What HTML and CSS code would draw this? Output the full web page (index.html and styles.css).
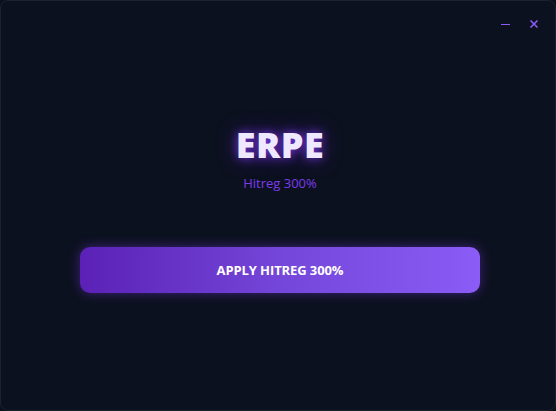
FILE: index.html
```html
<!DOCTYPE html>
<html>
<head>
<meta charset="utf-8">
<link rel="stylesheet" href="styles.css">
</head>
<body>
<div class="window">
  <div class="titlebar">
    <button class="ctl min" aria-label="Minimize"><svg width="10" height="10" viewBox="0 0 10 10"><line x1="1" y1="5.5" x2="10" y2="5.5" stroke="#8b5cf6" stroke-width="1"/></svg></button>
    <button class="ctl close" aria-label="Close"><svg width="10" height="10" viewBox="0 0 10 10"><path d="M1.5 1.5L8.5 8.5M8.5 1.5L1.5 8.5" stroke="#8b5cf6" stroke-width="1.6"/></svg></button>
  </div>
  <main class="content">
    <h1 class="title">ERPE</h1>
    <p class="subtitle">Hitreg 300%</p>
    <button class="apply">APPLY HITREG 300%</button>
  </main>
</div>
</body>
</html>
```
FILE: styles.css
```css
html, body {
  margin: 0;
  padding: 0;
  background: #0b101d;
}
.window {
  box-sizing: border-box;
  width: 556px;
  height: 411px;
  border: 1px solid #1b2130;
  border-radius: 8px;
  background: #0c111f;
  font-family: "Open Sans", "Noto Sans", sans-serif;
  display: flex;
  flex-direction: column;
  overflow: hidden;
}
.titlebar {
  height: 45px;
  display: flex;
  justify-content: flex-end;
  align-items: flex-start;
  padding: 13px 11px 0 0;
  box-sizing: border-box;
  gap: 9px;
}
.ctl {
  width: 20px;
  height: 20px;
  padding: 0;
  border: 0;
  background: transparent;
  display: flex;
  align-items: center;
  justify-content: center;
}
.content {
  display: flex;
  flex-direction: column;
  align-items: center;
  padding-left: 4px;
}
.title {
  margin: 77px 0 0;
  font-size: 36px;
  line-height: 44px;
  font-weight: 800;
  color: #efe9ff;
  text-shadow: 0 0 10px rgba(124, 58, 237, 0.85), 0 0 20px rgba(109, 40, 217, 0.6);
  letter-spacing: 0.5px;
}
.subtitle {
  margin: 7px 0 0;
  font-size: 13px;
  line-height: 18px;
  color: #7c3aed;
}
.apply {
  margin-top: 55px;
  width: 400px;
  height: 46px;
  border: 0;
  border-radius: 10px;
  background: linear-gradient(90deg, #5b21b6 0%, #7446d9 50%, #8b5cf6 100%);
  box-shadow: 0 0 12px rgba(124, 58, 237, 0.45);
  color: #ffffff;
  font-family: "Open Sans", "Noto Sans", sans-serif;
  font-weight: 700;
  font-size: 13px;
  letter-spacing: -0.1px;
}
```
